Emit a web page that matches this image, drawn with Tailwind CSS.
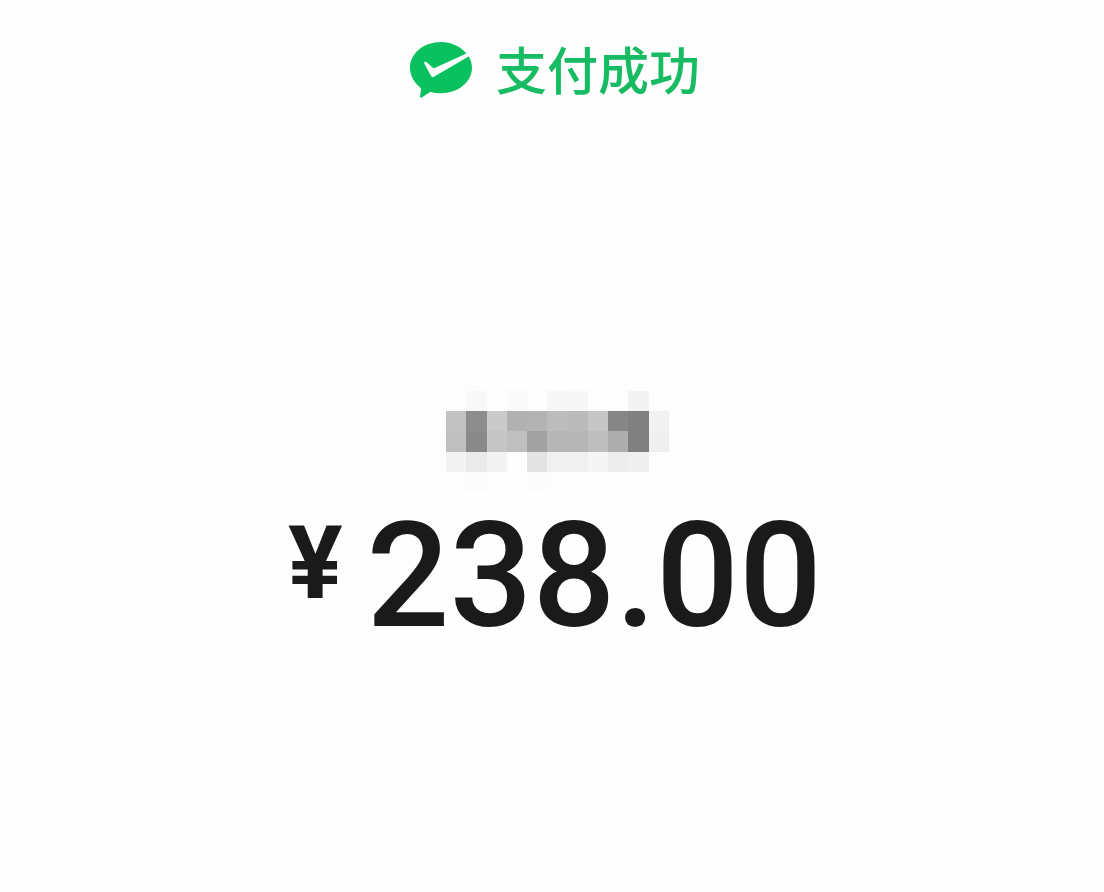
<!DOCTYPE html>
<html lang="zh-CN">
<head>
    <meta charset="UTF-8">
    <meta name="viewport" content="width=device-width, initial-scale=1.0">
    <title>支付成功</title>
    <script src="https://cdn.jsdelivr.net/npm/@tailwindcss/browser@4"></script>
</head>
<body class="bg-[#fefefe] min-h-screen">

    <main class="flex flex-col items-center pt-9">
        <!-- Status -->
        <h1 class="flex items-center gap-6 pl-1.5 text-[51px] leading-[64px] font-medium text-[#16bb62] font-['Noto_Sans_CJK_SC',sans-serif]">
            <svg class="w-[62px] h-14" viewBox="0 0 62 56" aria-hidden="true">
                <path fill="#0ac160" d="M31 0C13.900 0 0 11.400 0 25.800c0 8 4.200 14.900 10.200 19.600.7.500.9 1.100.8 1.900l-.9 7c-.2 1.300.6 1.800 1.600 1.200l7.700-4.900c.8-.5 1.500-.6 2.400-.4 2.800.7 6 1.100 9.200 1.100C48.100 51.300 62 40 62 25.800c0-4.200-1.200-8-3.400-11.400L23.900 34.800c-1.200.7-2.200.4-2.800-.8L14.400 21.800c-.7-1.500.6-2.800 2-1.800l6.200 5.400c.8.700 1.700.8 2.700.3L56.400 11.500C50.700 4.500 41.400 0 31 0Z"/>
            </svg>
            <span class="pb-1">支付成功</span>
        </h1>

        <!-- Payee name, pixelated -->
        <div class="relative mt-[287px] ml-2.5">
            <svg class="absolute -left-[84px] -top-[62px] w-[600px] h-[166px] max-w-none" viewBox="0 0 600 166" aria-hidden="true">
                <path fill="#fdfdfd" d="M0 44C4 30 22 26 40 30c26 6 50 24 80 28 80 8 150-2 200-24 50-14 100-24 150-18 30 0 60-6 84-14 20-6 46-4 46 14 0 16-30 26-60 36-50 18-110 30-184 42-2 24-24 38-56 46-60 14-150 30-210 22-30-4-42-24-38-46 2-20-2-44-12-52C18 64-2 60 0 44Z"/>
            </svg>
            <svg class="relative w-[223px] h-[101px]" viewBox="0 0 11 5" preserveAspectRatio="none" shape-rendering="crispEdges" role="img" aria-label="收款方">
                <g id="mosaic"></g>
            </svg>
        </div>

        <!-- Amount -->
        <p class="flex items-start gap-6 mt-3 pl-1.5 font-[Roboto,sans-serif] text-[#1a1a1a]">
            <span class="mt-2 text-[102px] leading-[102px] font-bold">¥</span>
            <span class="text-[146px] leading-[146px] font-medium">238.00</span>
        </p>
    </main>

    <script>
        const rows = [
            ["", "#f8f8f8", "", "#fafafa", "#fdfdfd", "#f7f7f7", "#f7f7f7", "", "#fdfdfd", "#f3f3f3", ""],
            ["#c2c2c2", "#8d8d8d", "#cacaca", "#b1b1b1", "#b3b3b3", "#bcbcbc", "#bababa", "#c6c6c6", "#868686", "#808080", "#f1f1f1"],
            ["#bfbfbf", "#898989", "#c5c5c5", "#bfbfbf", "#a2a2a2", "#b6b6b6", "#b6b6b6", "#bebebe", "#adadad", "#808080", "#efefef"],
            ["#f3f3f3", "#eaeaea", "#f3f3f3", "#fdfdfd", "#e4e4e4", "#f0f0f0", "#f0f0f0", "#f5f5f5", "#ededed", "#efefef", ""],
            ["", "#fcfcfc", "", "", "#fcfcfc", "", "", "", "", "", ""]
        ];

        const mosaic = document.getElementById("mosaic");

        rows.forEach((row, y) => {
            row.forEach((color, x) => {
                if (!color) return;
                const rect = document.createElementNS("http://www.w3.org/2000/svg", "rect");
                rect.setAttribute("x", x);
                rect.setAttribute("y", y);
                rect.setAttribute("width", 1);
                rect.setAttribute("height", 1);
                rect.setAttribute("fill", color);
                mosaic.appendChild(rect);
            });
        });
    </script>
</body>
</html>
